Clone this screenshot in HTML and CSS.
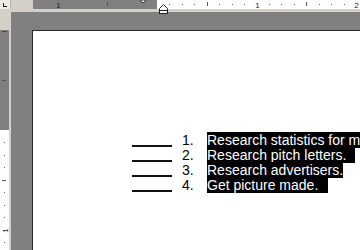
FILE: index.html
```html
<!DOCTYPE html>
<html lang="en">
<head>
    <meta charset="UTF-8">
    <title>Document</title>
    <link rel="stylesheet" href="styles.css">
</head>
<body>
    <div class="window">
        <div class="corner"><span class="tab-stop"></span></div>
        <div class="h-ruler-area">
            <svg class="h-ruler" width="327" height="9" id="hRuler"></svg>
            <svg class="indent-markers" width="40" height="15" viewBox="0 0 40 15">
                <!-- first line indent -->
                <path d="M1 0 H7 L4 3 Z" fill="#fff" stroke="#333" stroke-width="1"/>
                <!-- hanging indent + left indent -->
                <path d="M20.5 8.5 L24.5 4.5 L28.5 8.5 V10.5 H20.5 Z" fill="#fff" stroke="#222"/>
                <rect x="20.5" y="10.5" width="8" height="3" fill="#fff" stroke="#222"/>
            </svg>
        </div>
        <div class="v-ruler-area">
            <svg class="v-ruler" width="9" height="220" id="vRuler"></svg>
        </div>
        <div class="workspace">
            <div class="page">
                <div class="task-list">
                    <div class="task"><span class="blank"></span><span class="num">1.</span><span class="item">Research statistics for magazine article.</span></div>
                    <div class="task"><span class="blank"></span><span class="num">2.</span><span class="item pad-2">Research pitch letters.</span></div>
                    <div class="task"><span class="blank"></span><span class="num">3.</span><span class="item">Research advertisers.</span></div>
                    <div class="task"><span class="blank"></span><span class="num">4.</span><span class="item pad-4">Get picture made.</span></div>
                </div>
            </div>
        </div>
    </div>

    <script>
        const NS = 'http://www.w3.org/2000/svg';
        const STEP = 99.5 / 8;

        function el(name, attrs, text) {
            const node = document.createElementNS(NS, name);
            for (const k in attrs) node.setAttribute(k, attrs[k]);
            if (text) node.textContent = text;
            return node;
        }

        function drawHRuler() {
            const svg = document.getElementById('hRuler');
            const zero = 124;
            svg.appendChild(el('rect', { x: 0, y: 0, width: zero, height: 9, fill: '#808080' }));
            svg.appendChild(el('rect', { x: zero, y: 0, width: 327 - zero, height: 9, fill: '#fff' }));
            for (let i = -9; i <= 16; i++) {
                const x = Math.round(zero + i * STEP) + 0.5;
                if (x < 0 || x > 327 || i === 0) continue;
                if (i % 8 === 0) {
                    svg.appendChild(el('text', { x: x, y: 8, class: 'ruler-num', 'text-anchor': 'middle' }, String(Math.abs(i / 8))));
                } else if (i % 4 === 0) {
                    svg.appendChild(el('line', { x1: x, y1: 2, x2: x, y2: 6, stroke: '#555' }));
                } else {
                    svg.appendChild(el('line', { x1: x, y1: 4, x2: x, y2: 5, stroke: '#666' }));
                }
            }
        }

        function drawVRuler() {
            const svg = document.getElementById('vRuler');
            const zero = 100;
            svg.appendChild(el('rect', { x: 0, y: 0, width: 9, height: zero, fill: '#808080' }));
            svg.appendChild(el('rect', { x: 0, y: zero, width: 9, height: 120, fill: '#fff' }));
            svg.appendChild(el('line', { x1: 2, y1: 1.5, x2: 7, y2: 1.5, stroke: '#444' }));
            for (let i = -7; i <= 9; i++) {
                const y = Math.round(zero + i * STEP) + 0.5;
                if (y < 4 || i === 0) continue;
                if (i % 8 === 0) {
                    const t = el('text', { x: 4.5, y: y, class: 'ruler-num', 'text-anchor': 'middle', transform: `rotate(-90 4.5 ${y})`, dy: 3 }, String(Math.abs(i / 8)));
                    svg.appendChild(t);
                } else if (i % 4 === 0) {
                    svg.appendChild(el('line', { x1: 2, y1: y, x2: 6, y2: y, stroke: '#555' }));
                } else {
                    svg.appendChild(el('line', { x1: 4, y1: y, x2: 5, y2: y, stroke: '#666' }));
                }
            }
        }

        document.addEventListener('DOMContentLoaded', () => {
            drawHRuler();
            drawVRuler();
        });
    </script>
</body>
</html>
```

FILE: styles.css
```css
body {
    margin: 0;
    width: 360px;
    height: 250px;
    overflow: hidden;
    background-color: #d4d0c8;
    font-family: "Liberation Sans", Arial, sans-serif;
}
.window {
    display: grid;
    grid-template-columns: 11px 1fr;
    grid-template-rows: 12px 238px;
    width: 360px;
    height: 250px;
}
.corner {
    width: 10px;
    height: 9px;
    background-color: #ecebe6;
    border-right: 1px solid #b5b2a8;
    position: relative;
}
.tab-stop {
    position: absolute;
    left: 3px;
    top: 3px;
    width: 3px;
    height: 3px;
    border-left: 1px solid #222;
    border-bottom: 1px solid #222;
}
.h-ruler-area {
    position: relative;
    padding-left: 22px;
    height: 12px;
}
.h-ruler {
    display: block;
}
.indent-markers {
    position: absolute;
    left: 128px;
    top: 0;
    overflow: visible;
}
.ruler-num {
    font-family: "Liberation Sans", Arial, sans-serif;
    font-size: 8px;
    fill: #222;
}
.v-ruler-area {
    padding-top: 18px;
}
.v-ruler {
    display: block;
}
.workspace {
    background-color: #808080;
    padding-left: 21px;
    padding-top: 18px;
    overflow: hidden;
}
.page {
    width: 600px;
    height: 400px;
    background-color: #fff;
    border-left: 1px solid #2a2a2a;
    border-top: 1px solid #2a2a2a;
}
.task-list {
    padding-top: 102px;
    padding-left: 99px;
}
.task {
    font-size: 14px;
    line-height: 15px;
    white-space: nowrap;
    color: #000;
}
.blank {
    display: inline-block;
    width: 40px;
    height: 10px;
    border-bottom: 2px solid #111;
    vertical-align: -2px;
}
.num {
    display: inline-block;
    width: 25px;
    margin-left: 10px;
}
.item {
    background-color: #000;
    color: #fff;
}
.pad-2 {
    padding-right: 9px;
}
.pad-4 {
    padding-right: 10px;
}
```
